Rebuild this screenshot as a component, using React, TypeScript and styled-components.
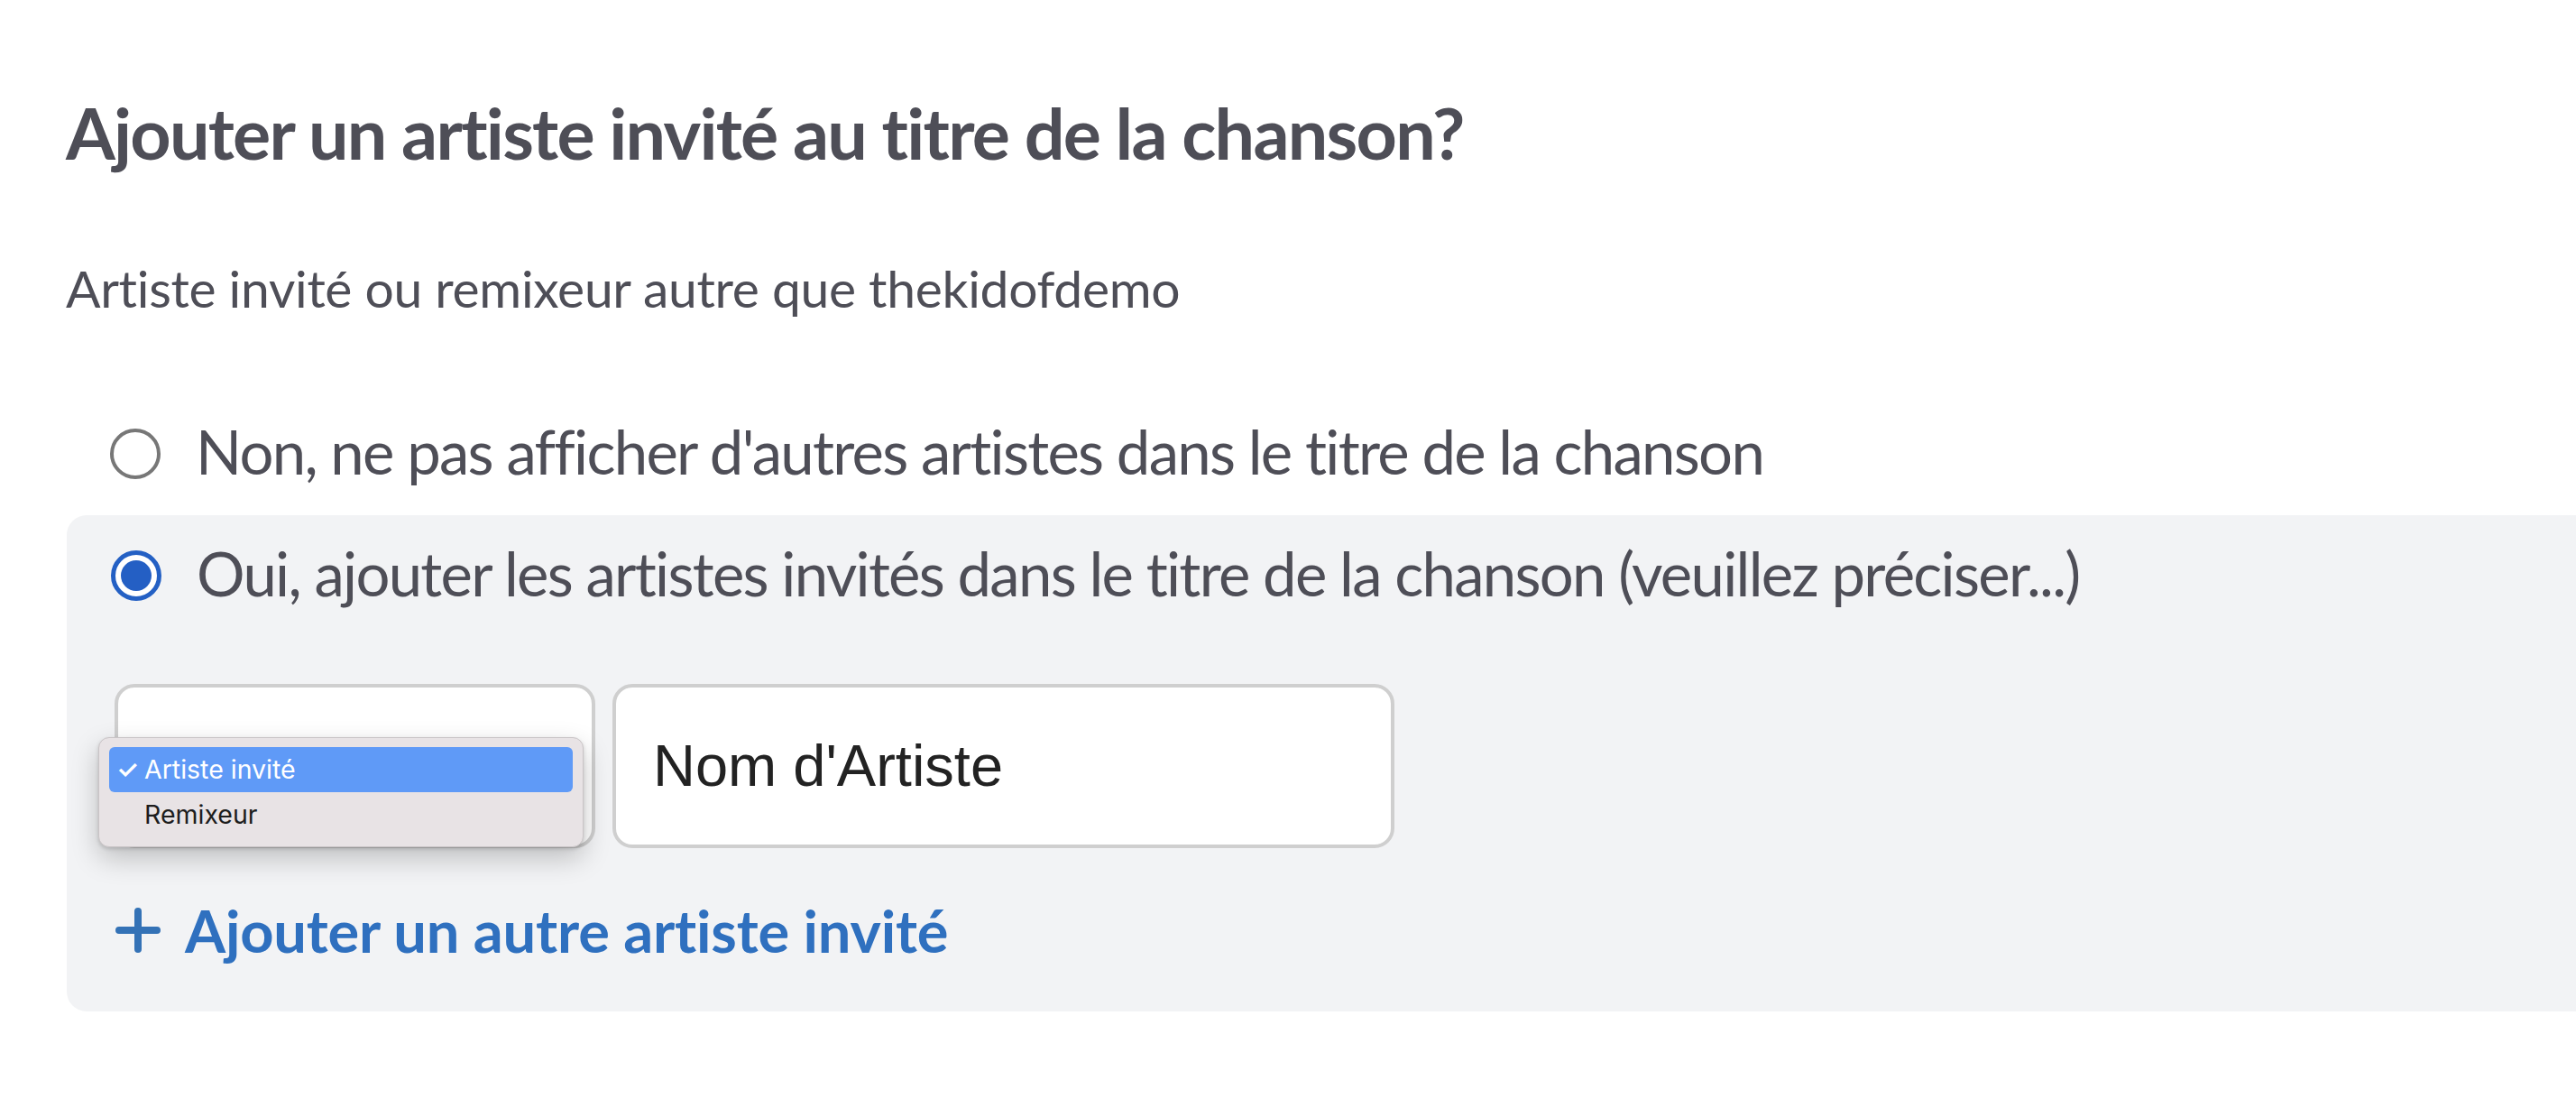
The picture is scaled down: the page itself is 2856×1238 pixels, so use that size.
import React from 'react';
import styled, {createGlobalStyle} from 'styled-components';

const GlobalStyle = createGlobalStyle`
  html, body {
    margin: 0;
    padding: 0;
    background: #ffffff;
  }
  body {
    font-family: Lato, "Open Sans", sans-serif;
    color: #4e4e57;
  }
`;

const Page = styled.div`
  padding: 100px 0 0 73px;
  overflow: hidden;
`;

const Title = styled.h2`
  margin: 0;
  font-size: 79px;
  font-weight: 700;
  line-height: 1.2;
  letter-spacing: -1.75px;
  color: #4e4e57;
`;

const Subtitle = styled.p`
  margin: 90px 0 0;
  font-size: 57px;
  line-height: 1.2;
  letter-spacing: -0.3px;
`;

const Options = styled.div`
  margin-top: 107px;
  display: flex;
  flex-direction: column;
`;

const OptionRow = styled.label`
  display: flex;
  align-items: center;
  gap: 39px;
  padding-left: 49px;
  font-size: 67px;
  line-height: 1.2;
  letter-spacing: -1.7px;
`;

const Radio = styled.span<{ $checked?: boolean }>`
  flex: none;
  box-sizing: border-box;
  width: 56px;
  height: 56px;
  border-radius: 50%;
  border: ${p => p.$checked ? '5px solid #2460c4' : '4px solid #777777'};
  background: #fff;
  display: flex;
  align-items: center;
  justify-content: center;
  margin-top: 6px;

  &::after {
    content: '';
    display: ${p => p.$checked ? 'block' : 'none'};
    width: 34px;
    height: 34px;
    border-radius: 50%;
    background: #245fc4;
  }
`;

const Panel = styled.div`
  margin-top: 30px;
  background: #f2f3f5;
  border-radius: 22px 0 0 22px;
  padding: 24px 0 51px 0;
  margin-left: 1px;
`;

const FieldRow = styled.div`
  display: flex;
  gap: 19px;
  margin: 83px 0 0 53px;
`;

const SelectWrap = styled.div`
  position: relative;
`;

const SelectBox = styled.div`
  box-sizing: border-box;
  width: 533px;
  height: 182px;
  border: 4px solid #cfcfcf;
  border-radius: 22px;
  background: #ffffff;
`;

const Menu = styled.div`
  position: absolute;
  left: -18px;
  top: 59px;
  box-sizing: border-box;
  width: 538px;
  padding: 10px 11px;
  background: #e8e3e5;
  border: 1px solid #c9c4c6;
  border-radius: 12px;
  box-shadow: 0 12px 30px rgba(0, 0, 0, 0.22), 0 2px 4px rgba(0, 0, 0, 0.15);
  font-family: Inter, "Noto Sans", sans-serif;
`;

const MenuItem = styled.div<{ $active?: boolean }>`
  display: flex;
  align-items: center;
  height: 50px;
  border-radius: 6px;
  padding-left: 8px;
  font-size: 28.5px;
  color: ${p => p.$active ? '#ffffff' : '#1d1d1d'};
  background: ${p => p.$active ? '#5f9af7' : 'transparent'};
`;

const Check = styled.span`
  width: 31px;
  font-size: 28px;
  font-weight: 600;
`;

const TextInput = styled.input`
  box-sizing: border-box;
  width: 867px;
  height: 182px;
  border: 4px solid #cfcfcf;
  border-radius: 22px;
  background: #ffffff;
  padding: 0 0 0 41px;
  font-family: "Liberation Sans", Arial, sans-serif;
  font-size: 65px;
  color: #222222;
  outline: none;
`;

const AddLink = styled.a`
  display: flex;
  align-items: center;
  gap: 27px;
  margin: 52px 0 0 54px;
  font-size: 65px;
  font-weight: 700;
  line-height: 1.2;
  letter-spacing: -0.2px;
  color: #2f70bf;
  text-decoration: none;
  cursor: pointer;
`;

const PlusIcon = () => (
	<svg width="50" height="50" viewBox="0 0 50 50" style={{flex: 'none'}}>
		<path d="M25 4 V46 M4 25 H46" stroke="#3472b6" strokeWidth="8" strokeLinecap="round" fill="none" />
	</svg>
);

export default function App() {
	return (
		<>
			<GlobalStyle />
			<Page>
				<Title>Ajouter un artiste invité au titre de la chanson?</Title>
				<Subtitle>Artiste invité ou remixeur autre que thekidofdemo</Subtitle>
				<Options>
					<OptionRow>
						<Radio />
						<span>Non, ne pas afficher d'autres artistes dans le titre de la chanson</span>
					</OptionRow>
					<Panel>
						<OptionRow>
							<Radio $checked />
							<span>Oui, ajouter les artistes invités dans le titre de la chanson (veuillez préciser...)</span>
						</OptionRow>
						<FieldRow>
							<SelectWrap>
								<SelectBox />
								<Menu>
									<MenuItem $active><Check>✓</Check>Artiste invité</MenuItem>
									<MenuItem><Check />Remixeur</MenuItem>
								</Menu>
							</SelectWrap>
							<TextInput readOnly defaultValue="Nom d'Artiste" />
						</FieldRow>
						<AddLink>
							<PlusIcon />
							Ajouter un autre artiste invité
						</AddLink>
					</Panel>
				</Options>
			</Page>
		</>
	);
}
